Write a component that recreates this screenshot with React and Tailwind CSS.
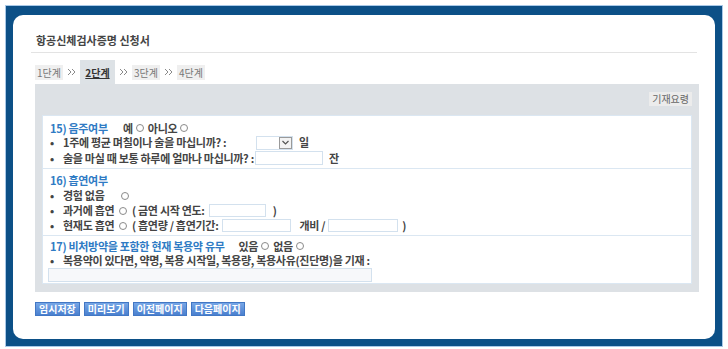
import React from "react";

const font = { fontFamily: '"Noto Sans CJK KR", "Noto Sans", sans-serif' };

function Radio() {
    return <span className="inline-block w-[8px] h-[8px] rounded-full border border-[#8a8a8a] bg-white mx-[3px] shrink-0" />;
}

function Bullet() {
    return <span className="inline-block w-[13px] shrink-0">•</span>;
}

function Chevrons() {
    return (
        <svg width="9" height="8" viewBox="0 0 9 8" className="shrink-0">
            <path d="M1 1 L4 4 L1 7" fill="none" stroke="#8a8a8a" strokeWidth="1" />
            <path d="M5 1 L8 4 L5 7" fill="none" stroke="#8a8a8a" strokeWidth="1" />
        </svg>
    );
}

function TextBox({ w, h = "h-[14px]" }) {
    return <span className={`inline-block ${w} ${h} border border-[#d3e1ee] bg-white shrink-0`} />;
}

function Step({ label, active }) {
    if (active) {
        return (
            <div className="h-[24px] w-[35px] bg-[#dde2e6] flex items-center justify-center text-[10px] font-bold text-[#333] underline">
                {label}
            </div>
        );
    }
    return (
        <div className="h-[15px] px-[2px] bg-[#efefef] flex items-center justify-center text-[10px] text-[#777]">
            {label}
        </div>
    );
}

export default function App() {
    const steps = ["1단계", "2단계", "3단계", "4단계"];
    const buttons = ["임시저장", "미리보기", "이전페이지", "다음페이지"];

    return (
        <div className="w-[728px] h-[349px] bg-white pt-[5px] pl-[5px]" style={font}>
            <div className="w-[718px] h-[342px] border border-[#a9c9e8] bg-[#0c5087] pt-[9px] pl-[7px] pr-[7px] pb-[7px]">
                <div className="h-full bg-white rounded-[10px] pl-[18px] pr-[16px] pt-[18px]">
                    {/* title */}
                    <div className="mr-[2px] pb-[5px] border-b border-[#e3e3e3]">
                        <div className="ml-[5px] h-[14px] leading-[14px] text-[11px] font-bold text-[#444]">항공신체검사증명 신청서</div>
                    </div>

                    {/* steps */}
                    <div className="mt-[7px] ml-[4px] flex items-center gap-[3px] h-[24px]">
                        {steps.map((s, i) => (
                            <React.Fragment key={s}>
                                {i > 0 && <div className="px-[1px]"><Chevrons /></div>}
                                <Step label={s} active={i === 1} />
                            </React.Fragment>
                        ))}
                    </div>

                    {/* form panel */}
                    <div className="ml-[4px] bg-[#dde1e5] pt-[8px] pb-[8px] px-[7px]">
                        <div className="flex justify-end h-[14px]">
                            <span className="bg-[#ececec] text-[#666] text-[10px] leading-[14px] px-[3px]">기재요령</span>
                        </div>

                        <div className="mt-[9px] bg-white border border-[#dbe7f2] text-[11px] leading-[13px] tracking-[-0.3px] font-bold text-[#444] whitespace-nowrap">
                            {/* 15 */}
                            <div className="pl-[7px] pt-[5px] pb-[2px]">
                                <div className="h-[14px] flex items-center">
                                    <span className="w-[73px] shrink-0 text-[#2f7bc4]">15) 음주여부</span>
                                    <span>예</span><Radio />
                                    <span className="ml-[1px]">아니오</span><Radio />
                                </div>
                                <div className="h-[15px] flex items-center">
                                    <span className="w-[206px] shrink-0 flex"><Bullet />1주에 평균 며칠이나 술을 마십니까? :</span>
                                    <span className="flex h-[14px] w-[37px] border border-[#d3e1ee] bg-white">
                                        <span className="flex-1" />
                                        <span className="w-[13px] border border-[#9a9a9a] bg-[#f3f3f3] flex items-center justify-center">
                                            <svg width="7" height="5" viewBox="0 0 7 5">
                                                <path d="M0.5 1 L3.5 4 L6.5 1" fill="none" stroke="#555" strokeWidth="1.2" />
                                            </svg>
                                        </span>
                                    </span>
                                    <span className="ml-[6px]">일</span>
                                </div>
                                <div className="h-[16px] flex items-center">
                                    <span className="flex shrink-0 mr-[1px]"><Bullet />술을 마실 때 보통 하루에 얼마나 마십니까? :</span>
                                    <TextBox w="w-[68px]" />
                                    <span className="ml-[6px]">잔</span>
                                </div>
                            </div>

                            {/* 16 */}
                            <div className="border-t border-[#dbe7f2] pl-[7px] pt-[4px] pb-[2px]">
                                <div className="h-[15px] flex items-center text-[#2f7bc4]">16) 흡연여부</div>
                                <div className="h-[15px] flex items-center">
                                    <span className="w-[68px] shrink-0 flex"><Bullet />경험 없음</span>
                                    <Radio />
                                </div>
                                <div className="h-[15px] flex items-center">
                                    <span className="w-[66px] shrink-0 flex"><Bullet />과거에 흡연</span>
                                    <Radio />
                                    <span className="ml-[2px]">( 금연 시작 연도:</span>
                                    <span className="ml-[4px] flex"><TextBox w="w-[57px]" h="h-[13px]" /></span>
                                    <span className="ml-[7px]">)</span>
                                </div>
                                <div className="h-[15px] flex items-center">
                                    <span className="w-[66px] shrink-0 flex"><Bullet />현재도 흡연</span>
                                    <Radio />
                                    <span className="ml-[2px]">( 흡연량 / 흡연기간:</span>
                                    <span className="ml-[4px] flex"><TextBox w="w-[69px]" h="h-[13px]" /></span>
                                    <span className="ml-[8px]">개비 /</span>
                                    <span className="ml-[3px] flex"><TextBox w="w-[70px]" h="h-[13px]" /></span>
                                    <span className="ml-[4px]">)</span>
                                </div>
                            </div>

                            {/* 17 */}
                            <div className="border-t border-[#dbe7f2] pl-[7px] pt-[3px] pb-[1px]">
                                <div className="h-[14px] flex items-center">
                                    <span className="shrink-0 mr-[14px] text-[#2f7bc4]">17) 비처방약을 포함한 현재 복용약 유무</span>
                                    <span>있음</span><Radio />
                                    <span className="ml-[1px]">없음</span><Radio />
                                </div>
                                <div className="h-[15px] flex items-center"><Bullet />복용약이 있다면, 약명, 복용 시작일, 복용량, 복용사유(진단명)을 기재 :</div>
                                <div className="-ml-[2px]">
                                    <span className="block w-[324px] h-[14px] border border-[#d3e1ee] bg-[#f7f8fa]" />
                                </div>
                            </div>
                        </div>
                    </div>

                    {/* action buttons */}
                    <div className="mt-[10px] ml-[4px] flex gap-[4px]">
                        {buttons.map((b) => (
                            <button
                                key={b}
                                className="h-[14px] px-[3px] bg-linear-to-b from-[#76a6e6] to-[#4a80cf] border border-[#4277c4] text-white text-[10px] leading-[12px] font-bold"
                            >
                                {b}
                            </button>
                        ))}
                    </div>
                </div>
            </div>
        </div>
    );
}
